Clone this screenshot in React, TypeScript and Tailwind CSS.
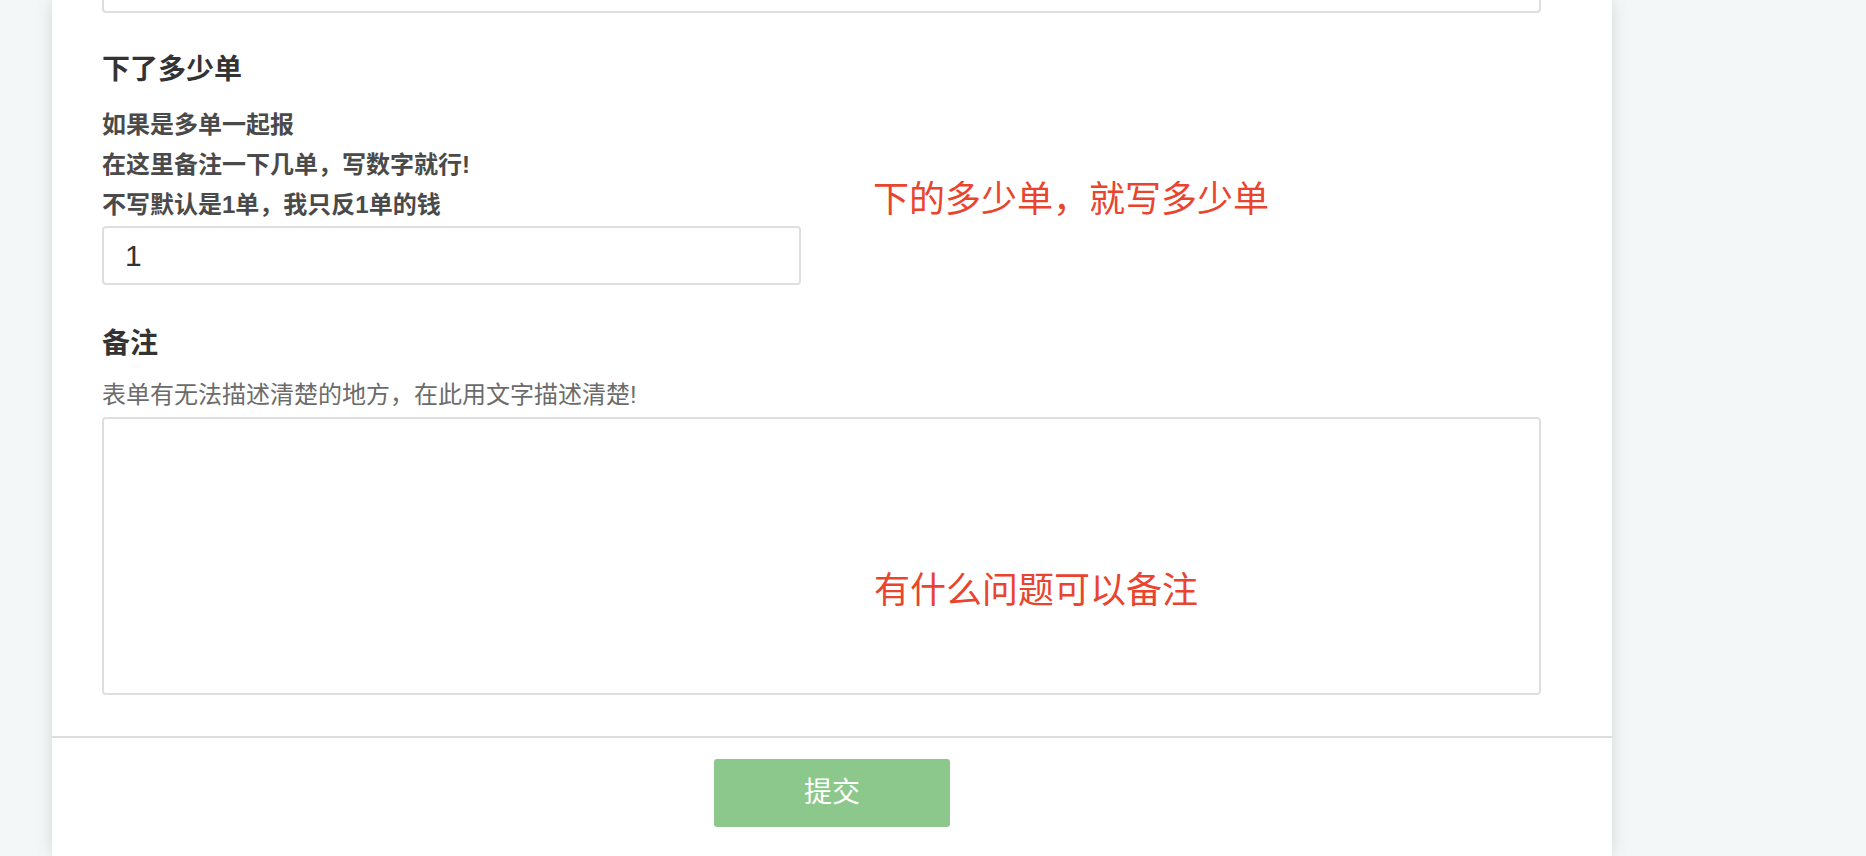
const font = { fontFamily: '"Liberation Sans", "Noto Sans CJK SC", sans-serif' };

function Field({ title, children }: { title: string; children: React.ReactNode }) {
  return (
    <div className="flex flex-col">
      <h3 className="text-[28px] leading-[40px] font-bold text-[#333]">{title}</h3>
      {children}
    </div>
  );
}

export default function App() {
  return (
    <div className="h-[856px] w-full overflow-hidden bg-[#f4f7f8]" style={font}>
      <section className="relative ml-[52px] h-[856px] w-[1560px] bg-white shadow-[0_0_16px_rgba(0,0,0,0.13)]">
        <div className="pl-[50px] pr-[71px]">
          {/* tail of the previous input */}
          <div className="h-[13px] rounded-b-[4px] border-2 border-t-0 border-[#dfdfdf]" />

          <div className="mt-[37px]">
            <Field title="下了多少单">
              <div className="mt-[15px] flex flex-col text-[24px] leading-[40px] font-bold text-[#4a4a4a]">
                <span>如果是多单一起报</span>
                <span>在这里备注一下几单，写数字就行!</span>
                <span>不写默认是1单，我只反1单的钱</span>
              </div>
              <input
                defaultValue="1"
                className="mt-[1px] h-[59px] w-[699px] rounded-[4px] border-2 border-[#dfdfdf] px-[21px] text-[30px] text-[#333] outline-none"
              />
            </Field>
          </div>

          <div className="mt-[39px]">
            <Field title="备注">
              <p className="mt-[11px] text-[24px] leading-[40px] text-[#6b6b6b]">
                表单有无法描述清楚的地方，在此用文字描述清楚!
              </p>
              <textarea className="mt-[2px] h-[278px] w-full resize-none rounded-[4px] border-2 border-[#dfdfdf] outline-none" />
            </Field>
          </div>
        </div>

        <div className="mt-[41px] border-t-2 border-[#dfdfdf] pt-[21px]">
          <div className="flex justify-center">
            <button className="h-[68px] w-[236px] rounded-[3px] bg-[#8cc88b] text-[28px] text-white">提交</button>
          </div>
        </div>

        <span className="absolute left-[821px] top-[178px] text-[36px] leading-[44px] text-[#e9442e]">
          下的多少单，就写多少单
        </span>
        <span className="absolute left-[822px] top-[569px] text-[36px] leading-[44px] text-[#e9442e]">
          有什么问题可以备注
        </span>
      </section>
    </div>
  );
}
